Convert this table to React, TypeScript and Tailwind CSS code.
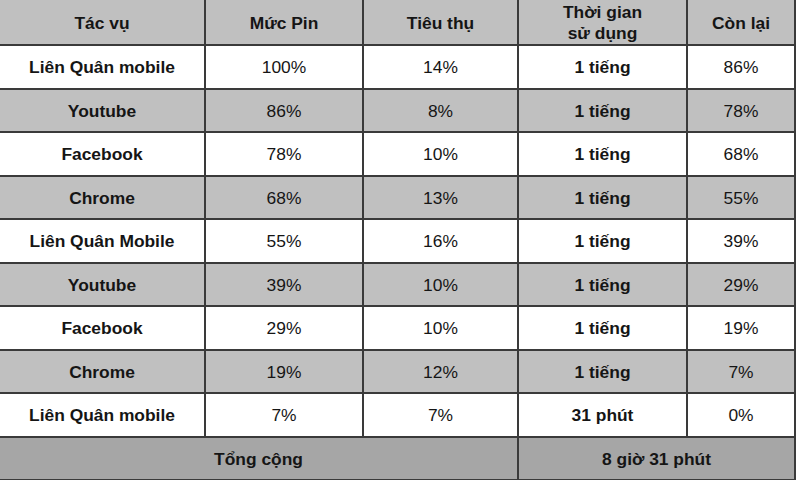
import React from 'react'

type Row = {
  task: string
  level: string
  used: string
  time: string
  left: string
}

const rows: Row[] = [
  { task: 'Liên Quân mobile', level: '100%', used: '14%', time: '1 tiếng', left: '86%' },
  { task: 'Youtube', level: '86%', used: '8%', time: '1 tiếng', left: '78%' },
  { task: 'Facebook', level: '78%', used: '10%', time: '1 tiếng', left: '68%' },
  { task: 'Chrome', level: '68%', used: '13%', time: '1 tiếng', left: '55%' },
  { task: 'Liên Quân Mobile', level: '55%', used: '16%', time: '1 tiếng', left: '39%' },
  { task: 'Youtube', level: '39%', used: '10%', time: '1 tiếng', left: '29%' },
  { task: 'Facebook', level: '29%', used: '10%', time: '1 tiếng', left: '19%' },
  { task: 'Chrome', level: '19%', used: '12%', time: '1 tiếng', left: '7%' },
  { task: 'Liên Quân mobile', level: '7%', used: '7%', time: '31 phút', left: '0%' },
]

function Cell({
  children,
  bold,
  shade,
  className = '',
}: {
  children: React.ReactNode
  bold?: boolean
  shade?: boolean
  className?: string
}) {
  return (
    <div
      className={`flex items-center justify-center pt-[2px] text-center leading-[21px] ${
        bold ? 'font-bold' : ''
      } ${shade ? 'bg-[#c0c0c0]' : 'bg-white'} ${className}`}
    >
      {children}
    </div>
  )
}

export default function App() {
  return (
    <div className="w-[800px] h-[480px] overflow-hidden bg-white font-['Liberation_Sans',Arial,sans-serif] text-[17.4px] text-[#151515]">
      <div className="w-[796px] grid grid-cols-[204px_156px_153px_167px_106px] grid-rows-[44px_repeat(10,41.5px)] gap-[2px] bg-[#3a3a3a] pr-[2px] pb-[2px]">
        {/* Header */}
        <Cell bold shade>Tác vụ</Cell>
        <Cell bold shade>Mức Pin</Cell>
        <Cell bold shade>Tiêu thụ</Cell>
        <Cell bold shade className="pt-0">
          Thời gian
          <br />
          sử dụng
        </Cell>
        <Cell bold shade>Còn lại</Cell>

        {/* Data rows */}
        {rows.map((r, i) => {
          const shade = i % 2 === 1
          return (
            <React.Fragment key={i}>
              <Cell bold shade={shade}>{r.task}</Cell>
              <Cell shade={shade}>{r.level}</Cell>
              <Cell shade={shade}>{r.used}</Cell>
              <Cell bold shade={shade}>{r.time}</Cell>
              <Cell shade={shade}>{r.left}</Cell>
            </React.Fragment>
          )
        })}

        {/* Total */}
        <div className="col-span-3 flex items-center justify-center pt-[2px] bg-[#a6a6a6] font-bold">
          Tổng cộng
        </div>
        <div className="col-span-2 flex items-center justify-center pt-[2px] bg-[#a6a6a6] font-bold">
          8 giờ 31 phút
        </div>
      </div>
    </div>
  )
}
